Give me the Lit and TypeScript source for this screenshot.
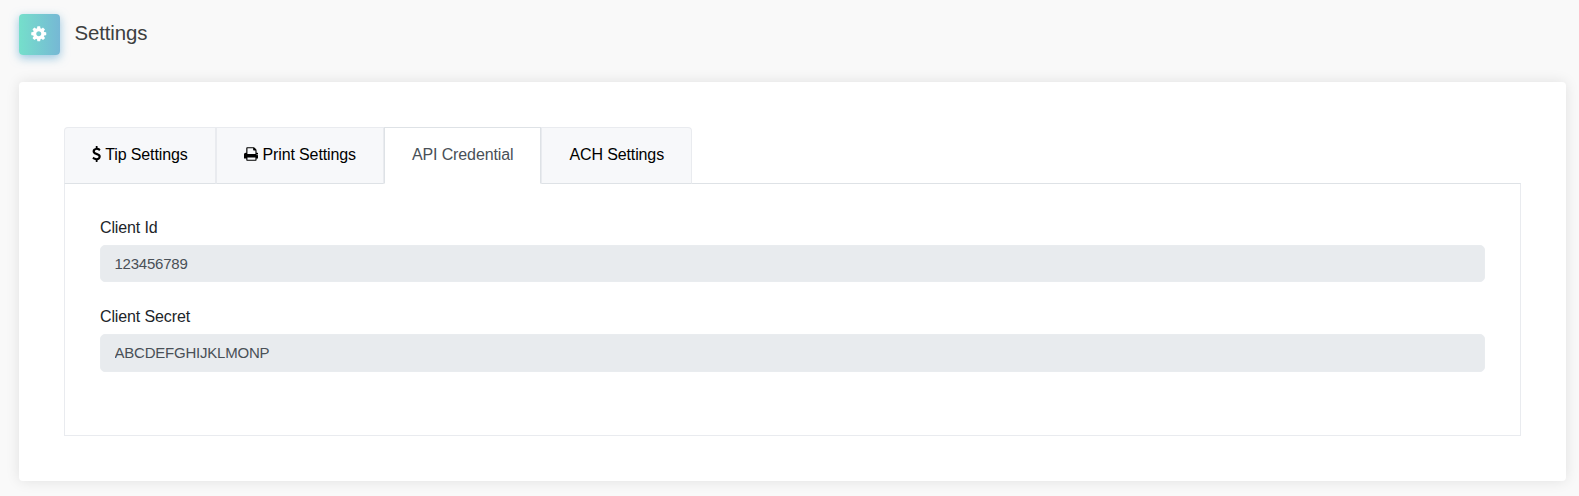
import { css, html, LitElement, nothing, svg } from 'lit';
import { customElement, state } from 'lit/decorators.js';
import { classMap } from 'lit/directives/class-map.js';

const ICON_COG = svg`<path d="M1152 896q0-106-75-181t-181-75-181 75-75 181 75 181 181 75 181-75 75-181zm512-109v222q0 12-8 23t-20 13l-185 28q-19 54-39 91 35 50 107 138 10 12 10 25t-9 23q-27 37-99 108t-94 71q-12 0-26-9l-138-108q-44 23-91 38-16 136-29 186-7 28-36 28h-222q-14 0-24.5-8.5t-11.5-21.5l-28-184q-49-16-90-37l-141 107q-10 9-25 9-14 0-25-11-126-114-165-168-7-10-7-23 0-12 8-23 15-21 51-66.5t54-70.5q-27-50-41-99l-183-27q-13-2-21-12.5t-8-23.5v-222q0-12 8-23t19-13l186-28q14-46 39-92-40-57-107-138-10-12-10-24 0-10 9-23 26-36 98.5-107.5t94.5-71.5q13 0 26 10l138 107q44-23 91-38 16-136 29-186 7-28 36-28h222q14 0 24.5 8.5t11.5 21.5l28 184q49 16 90 37l142-107q9-9 24-9 13 0 25 10 129 119 165 170 7 8 7 22 0 12-8 23-15 21-51 66.5t-54 70.5q26 50 41 98l183 28q13 2 21 12.5t8 23.5z" />`;

const ICON_DOLLAR = svg`<path d="M1362 1185q0 153-99.5 263.5t-258.5 136.5v175q0 14-9 23t-23 9h-135q-13 0-22.5-9.5t-9.5-22.5v-175q-66-9-127.5-31t-101.5-44.5-74-48-46.5-37.5-17.5-18q-17-21-2-41l103-135q7-10 23-12 15-2 24 9l2 2q113 99 243 125 37 8 74 8 81 0 142.5-43t61.5-122q0-28-15-53t-33.5-42-58.5-37.5-66-32-80-32.5q-39-16-61.5-25t-61.5-26.5-62.5-31-56.5-35.5-53.5-42.5-43.5-49-35.5-58-21-66.5-8.5-78q0-138 98-242t255-134v-180q0-13 9.5-22.5t22.5-9.5h135q14 0 23 9t9 23v176q57 6 110.5 23t87 33.5 63.5 37.5 39 29 15 14q17 18 5 38l-81 146q-8 15-23 16-14 3-27-7-3-3-14.5-12t-39-26.5-58.5-32-74.5-26-85.5-11.5q-95 0-155 43t-60 111q0 26 8.5 48t29.5 41.5 39.5 33 56 31 60.5 27 70 27.5q53 20 81 31.5t76 35 75.5 42.5 62 50 53 63.5 31.5 76.5 13 94z" />`;

const ICON_PRINT = svg`<path d="M448 1536h896v-256h-896v256zm0-640h896v-384h-160q-40 0-68-28t-28-68v-160h-640v640zm1152 64q0-26-19-45t-45-19-45 19-19 45 19 45 45 19 45-19 19-45zm128 0v416q0 13-9.5 22.5t-22.5 9.5h-224v160q0 40-28 68t-68 28h-960q-40 0-68-28t-28-68v-160h-224q-13 0-22.5-9.5t-9.5-22.5v-416q0-79 56.5-135.5t135.5-56.5h64v-544q0-40 28-68t68-28h672q40 0 88 20t76 48l152 152q28 28 48 76t20 88v256h64q79 0 135.5 56.5t56.5 135.5z" />`;

const TABS = [
  { id: 'tip', label: 'Tip Settings', icon: ICON_DOLLAR, viewBox: '384 0 1024 1792' },
  { id: 'print', label: 'Print Settings', icon: ICON_PRINT, viewBox: '64 0 1664 1792' },
  { id: 'api', label: 'API Credential' },
  { id: 'ach', label: 'ACH Settings' },
];

const FIELDS = [
  { id: 'client-id', label: 'Client Id', value: '123456789' },
  { id: 'client-secret', label: 'Client Secret', value: 'ABCDEFGHIJKLMONP' },
];

/**
 *  @element app-root
 * @description - Settings page with a tab group and the read-only API credentials.
 */
@customElement('app-root')
export class AppRootElement extends LitElement {
  static styles = [
    css`
      :host {
        display: block;
        box-sizing: border-box;
        height: 496px;
        padding: 14px 13px 15px 19px;
        overflow: hidden;
        background: #f9f9f9;
        color: #212529;
        font-family: 'Liberation Sans', Arial, sans-serif;
        font-size: 16px;
        line-height: 24px;
        letter-spacing: -0.12px;
      }

      *,
      *::before {
        box-sizing: border-box;
      }

      .header {
        display: flex;
        gap: 14.5px;
        height: 68px;
      }

      .badge {
        display: flex;
        align-items: center;
        justify-content: center;
        width: 41px;
        height: 41px;
        padding: 0 1px 1px 0;
        border-radius: 4px;
        background: linear-gradient(90deg, #75dfcb, #76b8d5);
        box-shadow: 0 3px 10px rgba(100, 170, 210, 0.65);
        color: #fff;
      }

      .badge svg {
        width: 17.5px;
        height: 17.5px;
      }

      .title {
        margin: 7px 0 0;
        color: #3d4040;
        font-size: 20.4px;
        font-weight: 400;
        line-height: 24px;
      }

      svg {
        display: block;
        fill: currentColor;
      }

      .card {
        height: 399px;
        padding: 45px;
        border-radius: 4px;
        background: #fff;
        box-shadow: 0 0 14px rgba(0, 0, 0, 0.1);
      }

      .tabs {
        display: flex;
        height: 56px;
      }

      .tab {
        display: flex;
        gap: 4px;
        height: 57px;
        margin: 0;
        padding: 15px 27px 0;
        border: 1px solid #e9ebef;
        border-bottom-color: #dee2e6;
        background: #f7f8fa;
        color: #000;
        font: inherit;
        letter-spacing: inherit;
        cursor: pointer;
      }

      .tab svg {
        height: 16px;
        margin-top: 3px;
      }

      .tab:first-child {
        border-top-left-radius: 4px;
      }

      .tab:last-child {
        border-top-right-radius: 4px;
      }

      .tab.active {
        border-color: #dee2e6 #dee2e6 #fff;
        background: #fff;
        color: #495057;
        z-index: 1;
      }

      .panel {
        height: 253px;
        padding: 32px 35px 0;
        border: 1px solid #e9ebef;
        border-top-color: #dee2e6;
      }

      .field {
        display: flex;
        flex-direction: column;
        gap: 5px;
        margin-bottom: 23.15px;
      }

      .input {
        height: 37.25px;
        padding: 0 14px 0.3px 13.5px;
        border: 1px solid #e9ecef;
        border-radius: 5px;
        outline: none;
        background: #e8ebee;
        color: #495057;
        font-family: inherit;
        font-size: 15px;
        letter-spacing: -0.22px;
      }
    `,
  ];

  @state()
  private _active = 'api';

  private _renderTab(tab: (typeof TABS)[number]) {
    return html`<button
      class=${classMap({ tab: true, active: tab.id === this._active })}
      role="tab"
      @click=${() => (this._active = tab.id)}>
      ${tab.icon ? html`<svg viewBox=${tab.viewBox}>${tab.icon}</svg>` : nothing}
      <span>${tab.label}</span>
    </button>`;
  }

  private _renderField(field: (typeof FIELDS)[number]) {
    return html`<div class="field">
      <label for=${field.id}>${field.label}</label>
      <input class="input" id=${field.id} .value=${field.value} readonly />
    </div>`;
  }

  render() {
    return html`
      <header class="header">
        <div class="badge">
          <svg viewBox="0 0 1792 1792">${ICON_COG}</svg>
        </div>
        <h1 class="title">Settings</h1>
      </header>
      <main class="card">
        <div class="tabs" role="tablist">${TABS.map(tab => this._renderTab(tab))}</div>
        <section class="panel">
          ${this._active === 'api' ? FIELDS.map(field => this._renderField(field)) : nothing}
        </section>
      </main>
    `;
  }
}
